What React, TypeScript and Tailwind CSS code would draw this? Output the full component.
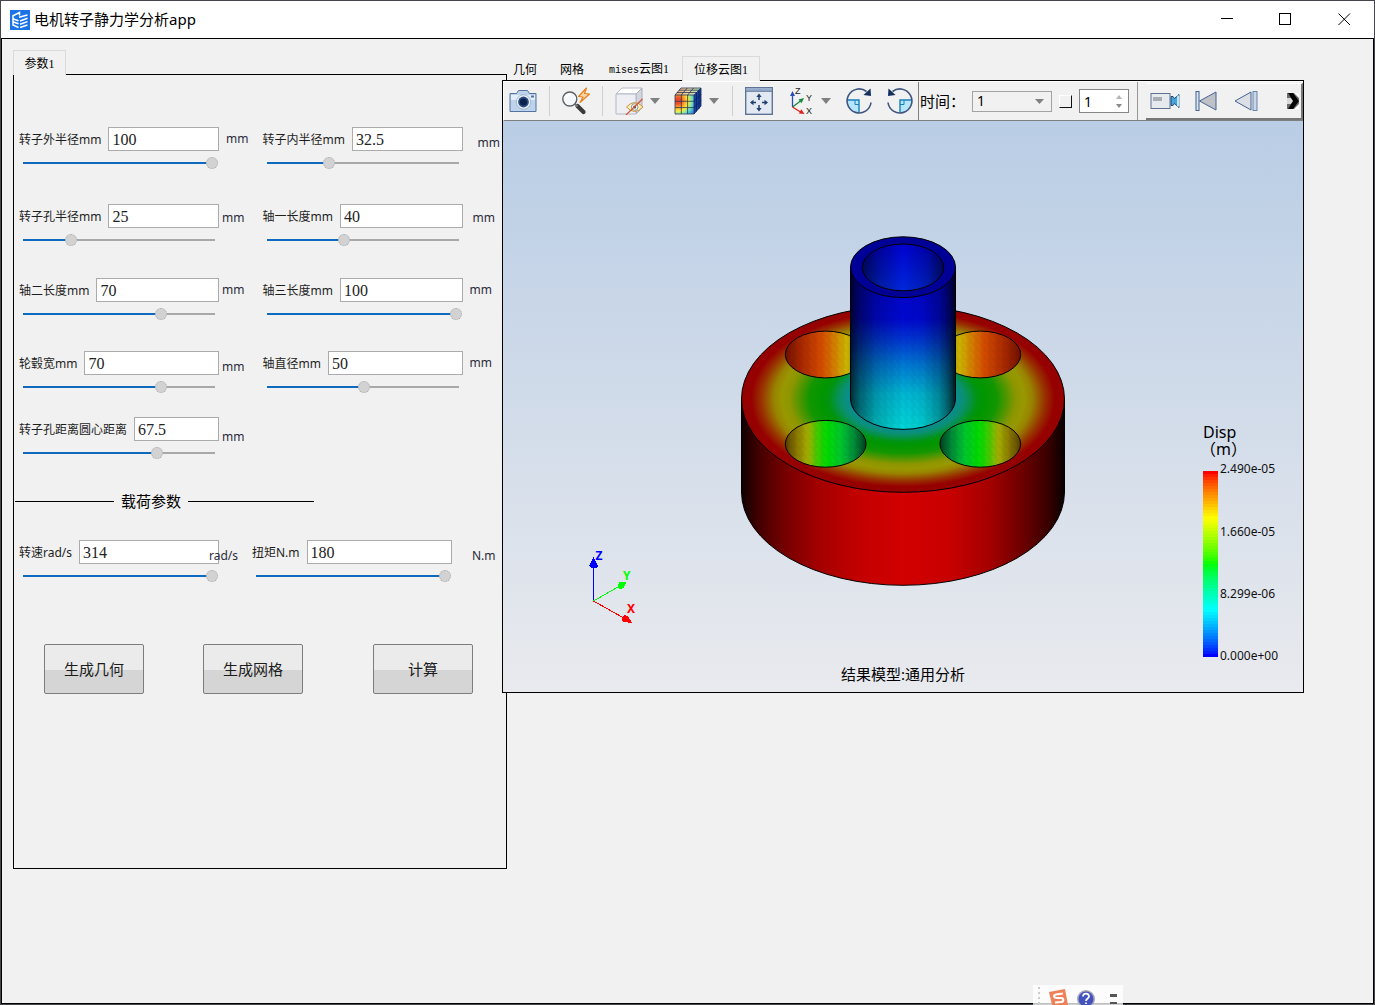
import { useState } from "react";

const labelFont = "font-['Noto_Sans','Noto_Sans_CJK_SC',sans-serif]";
const songFont = "font-['Liberation_Serif','Noto_Sans_CJK_SC',serif]";

type ParamProps = {
  id: string;
  label: string;
  value: string;
  pos: number;
  unit: string;
  unitClass: string;
  narrow?: boolean;
};

const rows: { className: string; params: ParamProps[] }[] = [
  {
    className: "flex",
    params: [
      { id: "outer", label: "转子外半径mm", value: "100", pos: 100, unit: "mm", unitClass: "ml-[7px]" },
      { id: "inner", label: "转子内半径mm", value: "32.5", pos: 31, unit: "mm", unitClass: "ml-[15px] pt-1" },
    ],
  },
  {
    className: "flex mt-[33px]",
    params: [
      { id: "hole", label: "转子孔半径mm", value: "25", pos: 23, unit: "mm", unitClass: "ml-[3px] pt-0.5" },
      { id: "shaft1", label: "轴一长度mm", value: "40", pos: 39, unit: "mm", unitClass: "ml-[10px] pt-0.5" },
    ],
  },
  {
    className: "flex mt-[30px]",
    params: [
      { id: "shaft2", label: "轴二长度mm", value: "70", pos: 72, unit: "mm", unitClass: "ml-[3px]" },
      { id: "shaft3", label: "轴三长度mm", value: "100", pos: 100, unit: "mm", unitClass: "ml-[7px]" },
    ],
  },
  {
    className: "flex mt-[29px]",
    params: [
      { id: "hub", label: "轮毂宽mm", value: "70", pos: 72, unit: "mm", unitClass: "ml-[3px] pt-1" },
      { id: "diameter", label: "轴直径mm", value: "50", pos: 50, unit: "mm", unitClass: "ml-[7px]" },
    ],
  },
  {
    className: "flex mt-[22px]",
    params: [
      { id: "distance", label: "转子孔距离圆心距离", value: "67.5", pos: 70, unit: "mm", unitClass: "ml-[3px] pt-2" },
    ],
  },
];

const loads: ParamProps[] = [
  { id: "speed", label: "转速rad/s", value: "314", pos: 100, unit: "rad/s", unitClass: "-ml-2.5 pt-1", narrow: true },
  { id: "torque", label: "扭矩N.m", value: "180", pos: 100, unit: "N.m", unitClass: "ml-5 pt-1" },
];

const Param = ({ id, label, value, pos, unit, unitClass, narrow }: ParamProps) => {
  const [text, setText] = useState(value);
  const [level, setLevel] = useState(pos);
  // thumb centre inside the 195px track, 12px thumb
  const fill = 6 + (level / 100) * 183;

  return (
    <div className={narrow ? "flex w-[233px]" : "flex w-[244px]"}>
      <div className="w-[200px] shrink-0">
        <div className="flex items-center gap-[7px]">
          <label htmlFor={id} className={`pt-0.5 text-xs whitespace-nowrap text-[#1e1e1e] ${labelFont}`}>
            {label}
          </label>
          <input
            id={id}
            type="text"
            value={text}
            onChange={(e) => setText(e.target.value)}
            className={`h-6 min-w-0 flex-1 border border-[#ababab] bg-white px-[3px] pt-0.5 text-base leading-5 text-[#222] outline-none ${songFont}`}
          />
        </div>
        <input
          type="range"
          aria-label={label}
          min={0}
          max={100}
          value={level}
          onChange={(e) => setLevel(Number(e.target.value))}
          style={{
            backgroundImage: `linear-gradient(to right, #0d6abf ${fill}px, #a8a8a8 ${fill}px)`,
          }}
          className="mt-1 ml-1 block h-4 w-[195px] appearance-none bg-[length:192px_2px] bg-left bg-no-repeat [&::-webkit-slider-thumb]:size-3 [&::-webkit-slider-thumb]:appearance-none [&::-webkit-slider-thumb]:rounded-full [&::-webkit-slider-thumb]:border [&::-webkit-slider-thumb]:border-dotted [&::-webkit-slider-thumb]:border-[#aaa] [&::-webkit-slider-thumb]:bg-[#d2d2d2]"
        />
      </div>
      <span className={`relative h-6 text-xs leading-6 whitespace-nowrap text-[#2b2b3a] ${labelFont} ${unitClass}`}>
        {unit}
      </span>
    </div>
  );
};

const ActionButton = ({ children }: { children: string }) => (
  <button
    type="button"
    className={`h-[50px] w-[100px] rounded-xs border border-[#7d7d7d] bg-linear-to-b from-[#ebebeb] from-52% to-[#d5d5d5] to-52% text-[15px] text-[#1c1c1c] ${labelFont}`}
  >
    {children}
  </button>
);

const AppLogo = () => (
  <svg viewBox="0 0 20 20" className="size-5">
    <rect width="20" height="20" fill="#1a73e8" />
    <g fill="none" stroke="#fff" strokeWidth="1.500">
      <path d="M2.500 6 9.500 2.500v3M3 5.500V15l5.500 2.500M3.500 9l5 1.700M3.500 12l5 1.800" />
      <path d="M17.500 5 9 7.200M17.500 8.300 10 11M17.500 11.600 10 14.300M17.500 15 10 17.500" />
    </g>
  </svg>
);

const CameraIcon = () => (
  <svg viewBox="0 0 28 28" className="size-7">
    <path d="M1 6.500h6.500l2-3h9l2 3H27v18H1z" fill="#bdd3ec" stroke="#53749f" strokeLinejoin="round" />
    <path d="M2 8h24v5H2z" fill="#e3eefa" />
    <circle cx="14.500" cy="15" r="7.200" fill="#eef4fb" stroke="#7c96b8" strokeWidth=".6" />
    <circle cx="14.500" cy="15" r="5.400" fill="#2a4d82" />
    <circle cx="14.500" cy="15" r="3.600" fill="#0c2248" />
    <rect x="22" y="8.500" width="3" height="2" fill="#53749f" />
  </svg>
);

const SearchFlashIcon = () => (
  <svg viewBox="0 0 28 28" className="size-7">
    <path d="m15.500 19 6 6" stroke="#3a3a3a" strokeWidth="4.200" strokeLinecap="round" />
    <path d="m12.500 16.500 3 3" stroke="#777" strokeWidth="2" />
    <circle cx="7.800" cy="12" r="7" fill="#f6f9fb" stroke="#5c6064" strokeWidth="1.400" />
    <path d="M4.500 10.500q1-3 4-3" fill="none" stroke="#fff" strokeWidth="2" />
    <path d="m24.500 1-8 8.500 4.500.5-3 5.500 9.500-8.500-5-.5z" fill="#fbd6a4" stroke="#e5811c" strokeWidth="1.200" strokeLinejoin="round" />
  </svg>
);

const HideCubeIcon = () => (
  <svg viewBox="0 0 28 28" className="size-7">
    <path d="M1 7 7 1h20l-6 6z" fill="#fff" stroke="#b9bcc6" />
    <path d="m21 7 6-6v20l-6 6z" fill="#d3d6de" stroke="#a9adba" />
    <path d="M1 7h20v20H1z" fill="#edeff5" stroke="#b3b7c4" />
    <path d="M11.500 20q8-9 16.500 0-8.500 9-16.500 0z" fill="#ffedb8" stroke="#c4953f" />
    <circle cx="19.700" cy="20" r="3.300" fill="#fff8e4" stroke="#6b7fa0" strokeWidth=".8" />
    <circle cx="19.700" cy="20" r="1.500" fill="#34507c" />
    <path d="m11 28 16.500-16" stroke="#d4522a" strokeWidth="1.200" />
  </svg>
);

const ColorCubeIcon = () => (
  <svg viewBox="0 0 28 28" className="size-7">
    <defs>
      <radialGradient id="cubeFront" cx=".15" cy=".3" r="1">
        <stop offset=".15" stopColor="#f04a28" />
        <stop offset=".4" stopColor="#ffb52a" />
        <stop offset=".55" stopColor="#f8ee3c" />
        <stop offset=".75" stopColor="#6fe0c0" />
        <stop offset="1" stopColor="#2c8be8" />
      </radialGradient>
      <linearGradient id="cubeTop">
        <stop offset="0" stopColor="#f0a078" />
        <stop offset=".5" stopColor="#ecdca8" />
        <stop offset="1" stopColor="#9fd8b8" />
      </linearGradient>
    </defs>
    <path d="m1 8 6-7h20l-7 7z" fill="url(#cubeTop)" />
    <path d="m20 8 7-7v18l-7 8z" fill="#1740a0" />
    <path d="M1 8h19v19H1z" fill="url(#cubeFront)" />
    <path
      d="M1 8h19v19H1zM1 14.300h19M1 20.600h19M7.300 8v19M13.600 8v19M1 8l6-7h20l-7 7M7.300 8l6-7M13.600 8l6-7M3 5.500h19.500M5 3.200h20"
      fill="none"
      stroke="#2a3550"
      strokeWidth=".8"
    />
    <path d="m20 14.300 7-7M20 20.600l7-7M22.500 5.500v19M25 3v19M27 1v18l-7 8" fill="none" stroke="#0a1f5c" strokeWidth=".8" />
  </svg>
);

const FitIcon = () => (
  <svg viewBox="0 0 28 28" className="size-7">
    <rect x=".7" y=".7" width="26.600" height="26.600" fill="#e3e9f3" stroke="#5f7495" strokeWidth="1.400" />
    <path d="M1.400 1.400h25.200v2.300H1.400z" fill="#93abcd" />
    <path d="M1 4.200h26" stroke="#4c658c" />
    <path d="M14 8v5M14 18v5M6 15.500h5M17 15.500h5" stroke="#213e6d" strokeWidth="1.500" />
    <path d="m14 6.500 2.700 3.500h-5.400zM14 24.500l2.700-3.500h-5.400zM5 15.500l3.500-2.700v5.400zM23 15.500l-3.500-2.700v5.400z" fill="#213e6d" />
  </svg>
);

const AxesIcon = () => (
  <svg viewBox="0 0 24 30" className="h-[30px] w-6">
    <path d="M3.500 21V9" stroke="#274fb5" strokeWidth="1.300" />
    <path d="m3.500 5 2.500 5H1z" fill="#274fb5" />
    <path d="m3.500 21 8-6" stroke="#168a3c" strokeWidth="1.300" />
    <path d="m15 12-2.500 5.200-3-3.800z" fill="#168a3c" />
    <path d="m3.500 21 8 5" stroke="#e02020" strokeWidth="1.300" />
    <path d="m15.500 28-5.600-.5 2.400-4.300z" fill="#e02020" />
    <g fontFamily="Liberation Sans, sans-serif" fontSize="9" fill="#222">
      <text x="6" y="8">Z</text>
      <text x="17" y="15">Y</text>
      <text x="17" y="28">X</text>
    </g>
  </svg>
);

const RotateIcon = ({ flip }: { flip?: boolean }) => (
  <svg viewBox="0 0 28 28" className={flip ? "size-7 -scale-x-100" : "size-7"}>
    <path d="M2 13.500h12v12A12 12 0 0 1 2 13.500z" fill="#b6e6fb" />
    <path d="M2 13h12v12.500" fill="none" stroke="#1580bd" strokeWidth="1.400" />
    <path d="M10 13.500v4h4" fill="none" stroke="#1580bd" />
    <path d="M21.500 4.500A12 12 0 1 0 26 15.500" fill="none" stroke="#3e557f" strokeWidth="1.600" />
    <path d="m25.500 1.500.5 7.500-7.500-1z" fill="#152f5f" />
  </svg>
);

const DropArrow = ({ label }: { label: string }) => (
  <button type="button" aria-label={label}>
    <svg viewBox="0 0 10 6" className="h-1.5 w-2.5">
      <path d="M0 0h10L5 6z" fill="#808080" />
    </svg>
  </button>
);

const ToolButton = ({ label, children }: { label: string; children: React.ReactNode }) => (
  <button type="button" aria-label={label} className="shrink-0">
    {children}
  </button>
);

const Separator = () => <div className="mx-3 h-[30px] w-px shrink-0 bg-[#cfcfcf]" />;

const Toolbar = () => (
  <div className="flex h-10 items-center overflow-hidden border-t border-b border-l border-t-white border-b-[#7f7f7f] border-l-white bg-[#f1f1f1] pl-[5px]">
    <ToolButton label="截图"><CameraIcon /></ToolButton>
    <Separator />
    <ToolButton label="缩放"><SearchFlashIcon /></ToolButton>
    <Separator />
    <div className="flex items-center gap-[7px]">
      <ToolButton label="隐藏"><HideCubeIcon /></ToolButton>
      <DropArrow label="隐藏选项" />
    </div>
    <div className="mr-px ml-3.5 flex items-center gap-[7px]">
      <ToolButton label="云图"><ColorCubeIcon /></ToolButton>
      <DropArrow label="云图选项" />
    </div>
    <Separator />
    <ToolButton label="适应窗口"><FitIcon /></ToolButton>
    <div className="ml-4 flex items-center gap-2">
      <ToolButton label="视图"><AxesIcon /></ToolButton>
      <DropArrow label="视图选项" />
    </div>
    <div className="ml-3.5 flex gap-[13px]">
      <ToolButton label="顺时针旋转"><RotateIcon /></ToolButton>
      <ToolButton label="逆时针旋转"><RotateIcon flip /></ToolButton>
    </div>
    <div className="ml-1 h-full w-px shrink-0 bg-[#808080]" />
    <label htmlFor="time" className={`shrink-0 pr-[7px] pl-px text-[15px] ${labelFont}`}>
      时间：
    </label>
    <div className="relative h-[21px] w-20 shrink-0">
      <select
        id="time"
        defaultValue="1"
        className={`block size-full appearance-none border border-[#a3a3a3] bg-[#f1f1f1] pl-1 text-sm leading-4 ${labelFont}`}
      >
        <option value="1">1</option>
      </select>
      <svg viewBox="0 0 9 5" className="pointer-events-none absolute top-2 right-2 h-[5px] w-[9px]">
        <path d="M0 0h9L4.500 5z" fill="#808080" />
      </svg>
    </div>
    <input
      type="checkbox"
      aria-label="循环"
      className="ml-[7px] size-[13px] shrink-0 appearance-none border border-t-white border-r-[#111] border-b-[#111] border-l-white"
    />
    <div className="relative ml-[7px] h-6 w-[50px] shrink-0">
      <input
        type="number"
        aria-label="帧"
        defaultValue={1}
        className={`block size-full [appearance:textfield] border border-[#868686] bg-white pl-1 text-sm outline-none [&::-webkit-inner-spin-button]:appearance-none ${labelFont}`}
      />
      <svg viewBox="0 0 6 13" className="pointer-events-none absolute top-1.5 right-[7px] h-[13px] w-1.5">
        <path d="M0 4 3 0l3 4z" fill="#b5b5b5" />
        <path d="m0 9 3 4 3-4z" fill="#8a8a8a" />
      </svg>
    </div>
    <div className="ml-2 h-full w-px shrink-0 bg-[#999]" />
    <div className="ml-2 flex h-[37px] min-w-0 flex-1 items-center overflow-hidden border-t border-r-2 border-b-2 border-t-white border-r-[#777] border-b-[#777] pl-1">
      <ToolButton label="录像">
        <svg viewBox="0 0 30 18" className="h-[18px] w-[30px]">
          <rect x="1" y="1.500" width="19" height="15" fill="#e6e9ed" stroke="#5f7391" />
          <rect x="3" y="5" width="9" height="4" fill="#a7adb5" />
          <path d="M21 4.500h2l1.500 2L29 2.500v13l-4.500-4-1.500 2h-2z" fill="#48a4dc" stroke="#23466f" />
          <path d="M27 3.500h2.500v11H27z" fill="#bfe3f7" />
        </svg>
      </ToolButton>
      <ToolButton label="首帧">
        <svg viewBox="0 0 22 20" className="ml-[15px] h-5 w-[22px]">
          <rect x="1" y=".5" width="3" height="19" fill="#d6e4f4" stroke="#476390" />
          <path d="M21 1v18L4.500 10z" fill="#bec2c8" stroke="#476390" />
        </svg>
      </ToolButton>
      <ToolButton label="上一帧">
        <svg viewBox="0 0 24 20" className="ml-[17px] h-5 w-6">
          <path d="M17 1v18L1 10z" fill="#dcdfe5" stroke="#476390" />
          <rect x="19" y=".5" width="4" height="19" fill="#c8d8ea" stroke="#6b83a8" />
        </svg>
      </ToolButton>
      <button type="button" aria-label="更多" className="mr-0.5 ml-auto">
        <svg viewBox="0 0 12 18" className="h-[18px] w-3">
          <path d="M0 1h12v16H0z" fill="#6d6d6d" />
          <path d="M0 6h4l3 3-3 3H0z" fill="#d8d8d8" />
          <path d="M1 1h5l6 8-6 8H1l5-8z" fill="#050505" />
          <path d="M7 1h5v5zM7 17h5v-5z" fill="#fff" />
        </svg>
      </button>
    </div>
  </div>
);

// red -> yellow -> green -> cyan -> blue, in flat bands
const bands = Array.from({ length: 62 }, (_, i) => {
  const t = (i / 61) * 4;
  const up = Math.round(255 * Math.pow(t % 1, 0.8));
  const down = Math.round(255 * Math.pow(1 - (t % 1), 0.8));
  if (t < 1) return `rgb(255,${up},0)`;
  if (t < 2) return `rgb(${down},255,0)`;
  if (t < 3) return `rgb(0,255,${up})`;
  return t < 4 ? `rgb(0,${down},255)` : "rgb(0,0,255)";
});

const legend = [
  { y: 473, text: "2.490e-05" },
  { y: 536, text: "1.660e-05" },
  { y: 598, text: "8.299e-06" },
  { y: 660, text: "0.000e+00" },
];

const Scene = () => (
  <svg viewBox="503 121 800 571" className="block h-auto w-full" fontFamily="'Noto Sans', 'Noto Sans CJK SC', sans-serif">
    <defs>
      <linearGradient id="sky" x1="0" y1="0" x2="0" y2="1">
        <stop offset="0" stopColor="#b9cde5" />
        <stop offset="1" stopColor="#e9eaee" />
      </linearGradient>
      <linearGradient id="rim">
        <stop offset="0" stopColor="#100000" />
        <stop offset=".06" stopColor="#480000" />
        <stop offset=".14" stopColor="#780000" />
        <stop offset=".24" stopColor="#a40000" />
        <stop offset=".36" stopColor="#c20000" />
        <stop offset=".5" stopColor="#d20000" />
        <stop offset=".64" stopColor="#c80000" />
        <stop offset=".77" stopColor="#a40000" />
        <stop offset=".87" stopColor="#6c0000" />
        <stop offset=".95" stopColor="#380000" />
        <stop offset="1" stopColor="#080000" />
      </linearGradient>
      <radialGradient id="face">
        <stop offset=".32" stopColor="#0a8c96" />
        <stop offset=".38" stopColor="#0a9070" />
        <stop offset=".46" stopColor="#009410" />
        <stop offset=".5" stopColor="#009600" />
        <stop offset=".58" stopColor="#129600" />
        <stop offset=".7" stopColor="#8c9600" />
        <stop offset=".75" stopColor="#989800" />
        <stop offset=".8" stopColor="#988200" />
        <stop offset=".88" stopColor="#983000" />
        <stop offset=".94" stopColor="#960000" />
        <stop offset="1" stopColor="#940000" />
      </radialGradient>
      <linearGradient id="shaft" gradientUnits="userSpaceOnUse" x1="0" y1="267" x2="0" y2="430">
        <stop offset="0" stopColor="#0000c8" />
        <stop offset=".32" stopColor="#0008d2" />
        <stop offset=".45" stopColor="#0038d4" />
        <stop offset=".6" stopColor="#0078d4" />
        <stop offset=".78" stopColor="#00b8d4" />
        <stop offset="1" stopColor="#00d8d8" />
      </linearGradient>
      <linearGradient id="shade">
        <stop offset="0" stopOpacity=".75" />
        <stop offset=".08" stopOpacity=".48" />
        <stop offset=".25" stopOpacity=".18" />
        <stop offset=".5" stopOpacity="0" />
        <stop offset=".68" stopOpacity=".05" />
        <stop offset=".85" stopOpacity=".28" />
        <stop offset=".94" stopOpacity=".55" />
        <stop offset="1" stopOpacity=".85" />
      </linearGradient>
      <linearGradient id="boreShade">
        <stop offset="0" stopOpacity=".6" />
        <stop offset=".2" stopOpacity=".28" />
        <stop offset=".5" stopOpacity="0" />
        <stop offset=".8" stopOpacity=".22" />
        <stop offset="1" stopOpacity=".6" />
      </linearGradient>
      <linearGradient id="bore" x1="0" y1="0" x2="0" y2="1">
        <stop offset="0" stopColor="#0000d0" />
        <stop offset="1" stopColor="#0028dc" />
      </linearGradient>
      <linearGradient id="holeBack">
        <stop offset="0" stopColor="#701000" />
        <stop offset=".2" stopColor="#a82800" />
        <stop offset=".45" stopColor="#d44c00" />
        <stop offset=".6" stopColor="#d47c00" />
        <stop offset=".75" stopColor="#ccb400" />
        <stop offset="1" stopColor="#909000" />
      </linearGradient>
      <linearGradient id="holeFront">
        <stop offset="0" stopColor="#584000" />
        <stop offset=".15" stopColor="#8c7c00" />
        <stop offset=".28" stopColor="#a4b000" />
        <stop offset=".42" stopColor="#30d000" />
        <stop offset=".52" stopColor="#00dc00" />
        <stop offset=".7" stopColor="#00c430" />
        <stop offset=".85" stopColor="#008c38" />
        <stop offset="1" stopColor="#004020" />
      </linearGradient>
      <pattern id="mesh" width="7" height="8" patternUnits="userSpaceOnUse">
        <path d="M0 0h3.500L7 8H3.500zM0 8l3.500-4L7 8z" fill="#000" fillOpacity=".035" />
      </pattern>
    </defs>
    <rect x="503" y="121" width="800" height="571" fill="url(#sky)" />

    <g stroke="#000">
      <path d="M741.500 399v93a161.500 93.300 0 0 0 323 0v-93z" fill="url(#rim)" />
      <ellipse cx="903" cy="399" rx="161.500" ry="93.300" fill="url(#face)" />
      <ellipse cx="825.700" cy="354.500" rx="40.400" ry="23.400" fill="url(#holeBack)" />
      <ellipse cx="825.700" cy="443.800" rx="40.400" ry="23.400" fill="url(#holeFront)" />
      <g transform="matrix(-1 0 0 1 1806 0)">
        <ellipse cx="825.700" cy="354.500" rx="40.400" ry="23.400" fill="url(#holeBack)" />
        <ellipse cx="825.700" cy="443.800" rx="40.400" ry="23.400" fill="url(#holeFront)" />
      </g>
    </g>
    <g fill="url(#mesh)">
      <ellipse cx="825.700" cy="354.500" rx="40" ry="23" />
      <ellipse cx="980.300" cy="354.500" rx="40" ry="23" />
      <ellipse cx="825.700" cy="443.800" rx="40" ry="23" />
      <ellipse cx="980.300" cy="443.800" rx="40" ry="23" />
    </g>
    <path d="M850.500 267v132a52.500 30.400 0 0 0 105 0V267z" fill="url(#shaft)" />
    <path d="M850.500 267v132a52.500 30.400 0 0 0 105 0V267z" fill="url(#mesh)" />
    <path d="M850.500 267v132a52.500 30.400 0 0 0 105 0V267z" fill="url(#shade)" stroke="#000" />
    <ellipse cx="903" cy="267.200" rx="52.500" ry="30.400" fill="#000096" stroke="#000" />
    <ellipse cx="903" cy="267.400" rx="40.700" ry="23.400" fill="url(#bore)" />
    <ellipse cx="903" cy="267.400" rx="40.700" ry="23.400" fill="url(#boreShade)" stroke="#000" />

    <g strokeWidth="1" shapeRendering="crispEdges">
      <path d="M593.500 601v-36" stroke="#00f" />
      <path d="m593.500 601 28-16" stroke="#0f0" />
      <path d="m593.500 601 32 18" stroke="#f00" />
      <path d="m593.500 557 4.500 9-2 2h-5l-2-2z" fill="#00f" />
      <path d="m626.500 582-3 6-4 1-2-3 2-4z" fill="#0f0" />
      <path d="m632 623-9-1-1.500-3 2.500-4 4 1z" fill="#f00" />
    </g>
    <g fontSize="12" fontWeight="700" fontFamily="'Noto Sans', sans-serif">
      <text x="595.500" y="560" fill="#00f">Z</text>
      <text x="623" y="580" fill="#0f0">Y</text>
      <text x="627" y="613" fill="#f00">X</text>
    </g>

    <text fontSize="16">
      <tspan x="1203" y="438">Disp</tspan>
      <tspan x="1200" y="455">（m）</tspan>
    </text>
    <g shapeRendering="crispEdges">
      {bands.map((color, i) => (
        <rect key={i} x="1203" y={471 + i * 3} width="15" height="3" fill={color} />
      ))}
    </g>
    {legend.map((item) => (
      <text key={item.text} x="1220" y={item.y} fontSize="12" fill="#111">
        {item.text}
      </text>
    ))}
    <text x="903" y="680" fontSize="15" textAnchor="middle">结果模型:通用分析</text>
  </svg>
);

const ImeBar = () => (
  <div className="absolute right-[252px] bottom-0 flex h-5 w-[90px] items-start gap-2 overflow-hidden bg-white/75 pl-1">
    <svg viewBox="0 0 4 20" className="h-5 w-1">
      <path d="M2 2v18" stroke="#ccc" strokeWidth="2" strokeDasharray="2 3" />
    </svg>
    <svg viewBox="0 0 20 16" className="mt-1 h-4 w-5">
      <path d="m0 3 16-3 3 16H3z" fill="#f08058" />
      <path d="m14 4.500-7 1c-3 .5-2 3.500 0 3.500h5c3 0 3 4 0 4l-6 .5" fill="none" stroke="#fff" strokeWidth="2.200" />
    </svg>
    <svg viewBox="0 0 20 16" className="mt-1 h-4 w-5">
      <circle cx="9" cy="10" r="9" fill="#a8a8b4" />
      <circle cx="9" cy="10" r="7.500" fill="#4452c0" />
      <path d="M6 7.500C6 3.500 12 4 12 7.500c0 2-3 2-3 4.500M9 13.500V15" fill="none" stroke="#fff" strokeWidth="1.800" />
    </svg>
    <svg viewBox="0 0 8 12" className="mt-2 ml-1 h-3 w-2">
      <path d="M1 1h7v3H1zM1 9h7v2H1z" fill="#555" />
    </svg>
  </div>
);

const App = () => {
  return (
    <div className="relative flex min-h-screen flex-col bg-[#44464c] p-px text-black">
      <header className="flex h-[37px] items-center bg-white pl-[9px]">
        <AppLogo />
        <h1 className={`ml-1 flex-1 text-[15px] ${labelFont}`}>电机转子静力学分析app</h1>
        <div className="flex h-full">
          <button type="button" aria-label="最小化" className="flex w-[59px] items-center justify-center">
            <svg viewBox="0 0 13 13" className="size-[13px]" shapeRendering="crispEdges">
              <path d="M1 5.500h12" stroke="#000" />
            </svg>
          </button>
          <button type="button" aria-label="最大化" className="flex w-[59px] items-center justify-center">
            <svg viewBox="0 0 13 13" className="size-[13px]" shapeRendering="crispEdges">
              <path d="M.5.500h11v11H.5z" fill="none" stroke="#000" />
            </svg>
          </button>
          <button type="button" aria-label="关闭" className="flex w-[59px] items-center justify-center">
            <svg viewBox="0 0 13 13" className="size-[13px]">
              <path d="m.5.500 11.500 11.500M12 .5.500 12" stroke="#000" />
            </svg>
          </button>
        </div>
      </header>

      <main className="flex flex-1 items-start border border-black bg-[#f1f1f1] pt-[11px] pl-[11px]">
        <section className="w-[494px] shrink-0">
          <button
            type="button"
            className={`relative -mb-px block h-[25px] w-[53px] border border-b-0 border-[#d9d9d9] bg-[#f1f1f1] pt-0.5 text-xs ${songFont}`}
          >
            参数1
          </button>
          <form className="border border-black pt-[52px] pb-[174px] pl-[5px]">
            {rows.map((row) => (
              <div key={row.params[0].id} className={row.className}>
                {row.params.map((param) => (
                  <Param key={param.id} {...param} />
                ))}
              </div>
            ))}

            <div className="mt-7 -ml-1 flex h-6 w-[299px] items-center gap-[7px]">
              <div className="h-px w-[99px] bg-black" />
              <h2 className={`text-[15px] ${labelFont}`}>载荷参数</h2>
              <div className="h-px flex-1 bg-black" />
            </div>

            <div className="mt-[27px] flex">
              {loads.map((param) => (
                <Param key={param.id} {...param} />
              ))}
            </div>

            <div className="mt-15 mr-[33px] ml-[25px] flex justify-between">
              <div className="flex gap-[59px]">
                <ActionButton>生成几何</ActionButton>
                <ActionButton>生成网格</ActionButton>
              </div>
              <ActionButton>计算</ActionButton>
            </div>
          </form>
        </section>

        <section className="relative mt-1.5 mr-[69px] -ml-[5px] min-w-0 flex-1">
          <div className={`relative -mb-px flex h-[25px] text-xs ${songFont}`}>
            <button type="button" className="h-[25px] px-[11px] pt-0.5">几何</button>
            <button type="button" className="h-[25px] px-3 pt-0.5">网格</button>
            <button type="button" className="h-[25px] px-[13px] pt-0.5">
              <span className="font-['Liberation_Mono',monospace] text-[10px]">mises</span>云图1
            </button>
            <button type="button" className="h-[25px] border border-b-0 border-[#d9d9d9] bg-[#f1f1f1] px-[11px] pt-0.5">
              位移云图1
            </button>
          </div>
          <div className="border border-black">
            <Toolbar />
            <Scene />
          </div>
        </section>
      </main>
      <ImeBar />
    </div>
  );
};

export default App;
